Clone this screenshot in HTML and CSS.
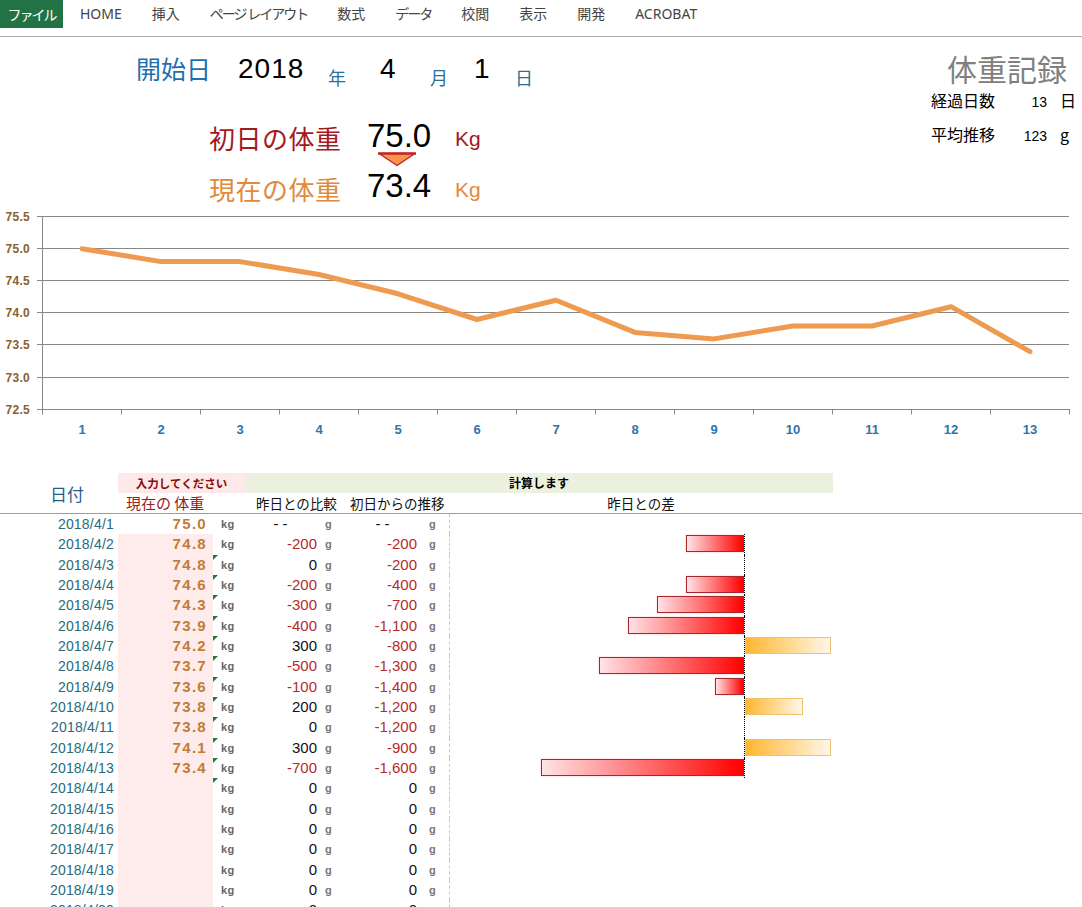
FILE: index.html
```html
<!DOCTYPE html>
<html lang="ja">
<head>
<meta charset="utf-8">
<title>体重記録</title>
<link rel="stylesheet" href="styles.css">
</head>
<body>
<div class="menu">
  <div class="menu-file">ファイル</div>
  <div class="menu-items">
    <span>HOME</span>
    <span>挿入</span>
    <span class="narrow">ページ レイアウト</span>
    <span>数式</span>
    <span class="narrow">データ</span>
    <span>校閲</span>
    <span>表示</span>
    <span>開発</span>
    <span>ACROBAT</span>
  </div>
</div>

<div class="top">
  <div class="top-left">
    <div class="start-row">
      <div class="start-label">開始日</div>
      <div class="big-digit">2018</div>
      <div class="unit-kanji">年</div>
      <div class="big-digit">4</div>
      <div class="unit-kanji">月</div>
      <div class="big-digit">1</div>
      <div class="unit-kanji">日</div>
    </div>
    <div class="weight-row w1">
      <div class="wlabel first-label">初日の体重</div>
      <div class="wnum">75.0</div>
      <div class="wunit first-unit">Kg</div>
    </div>
    <div class="tri-row">
      <svg width="40" height="15" viewBox="0 0 40 15">
        <polygon points="2,1.5 38,1.5 20,13.5" fill="#F7954A" stroke="#C0282A" stroke-width="1.5" stroke-linejoin="round"/>
        <line x1="1" y1="1.5" x2="39" y2="1.5" stroke="#C0282A" stroke-width="2.5"/>
      </svg>
    </div>
    <div class="weight-row w2">
      <div class="wlabel now-label">現在の体重</div>
      <div class="wnum">73.4</div>
      <div class="wunit now-unit">Kg</div>
    </div>
  </div>
  <div class="top-right">
    <div class="title">体重記録</div>
    <div class="stat stat1">
      <span class="stat-label">経過日数</span>
      <span class="stat-val">13</span>
      <span class="stat-unit">日</span>
    </div>
    <div class="stat stat2">
      <span class="stat-label">平均推移</span>
      <span class="stat-val">123</span>
      <span class="stat-unit">g</span>
    </div>
  </div>
</div>

<svg class="chart" width="1082" height="240" viewBox="0 0 1082 240">
  <g stroke="#878787" stroke-width="1">
    <line x1="37" y1="11.5" x2="1069" y2="11.5"/>
    <line x1="37" y1="43.5" x2="1069" y2="43.5"/>
    <line x1="37" y1="75.5" x2="1069" y2="75.5"/>
    <line x1="37" y1="107.5" x2="1069" y2="107.5"/>
    <line x1="37" y1="139.5" x2="1069" y2="139.5"/>
    <line x1="37" y1="172.5" x2="1069" y2="172.5"/>
    <line x1="37" y1="204.5" x2="1070" y2="204.5"/>
    <line x1="42.5" y1="11" x2="42.5" y2="209.5"/>
    <line x1="121.5" y1="204.5" x2="121.5" y2="209.5"/>
    <line x1="200.5" y1="204.5" x2="200.5" y2="209.5"/>
    <line x1="279.5" y1="204.5" x2="279.5" y2="209.5"/>
    <line x1="358.5" y1="204.5" x2="358.5" y2="209.5"/>
    <line x1="437.5" y1="204.5" x2="437.5" y2="209.5"/>
    <line x1="516.5" y1="204.5" x2="516.5" y2="209.5"/>
    <line x1="595.5" y1="204.5" x2="595.5" y2="209.5"/>
    <line x1="674.5" y1="204.5" x2="674.5" y2="209.5"/>
    <line x1="753.5" y1="204.5" x2="753.5" y2="209.5"/>
    <line x1="832.5" y1="204.5" x2="832.5" y2="209.5"/>
    <line x1="911.5" y1="204.5" x2="911.5" y2="209.5"/>
    <line x1="990.5" y1="204.5" x2="990.5" y2="209.5"/>
    <line x1="1069.5" y1="204.5" x2="1069.5" y2="209.5"/>
  </g>
  <g class="ylabels" text-anchor="end">
    <text x="30" y="16">75.5</text>
    <text x="30" y="48">75.0</text>
    <text x="30" y="80">74.5</text>
    <text x="30" y="112">74.0</text>
    <text x="30" y="144">73.5</text>
    <text x="30" y="177">73.0</text>
    <text x="30" y="209">72.5</text>
  </g>
  <g class="xlabels" text-anchor="middle">
    <text x="82" y="229">1</text>
    <text x="161" y="229">2</text>
    <text x="240" y="229">3</text>
    <text x="319" y="229">4</text>
    <text x="398" y="229">5</text>
    <text x="477" y="229">6</text>
    <text x="556" y="229">7</text>
    <text x="635" y="229">8</text>
    <text x="714" y="229">9</text>
    <text x="793" y="229">10</text>
    <text x="872" y="229">11</text>
    <text x="951" y="229">12</text>
    <text x="1030" y="229">13</text>
  </g>
  <polyline fill="none" stroke="#EE9A4F" stroke-width="5" stroke-linejoin="round" stroke-linecap="round"
    points="82,43.7 161,56.6 240,56.6 319,69.5 398,88.8 477,114.5 556,95.2 635,127.4 714,133.9 793,121 872,121 951,101.7 1030,146.7"/>
</svg>

<div class="thead">
  <div class="h-date">日付</div>
  <div class="h-input">入力してください</div>
  <div class="h-calc">計算します</div>
  <div class="h-weight">現在の 体重</div>
  <div class="h-cmp1">昨日との比較</div>
  <div class="h-cmp2">初日からの推移</div>
  <div class="h-diff">昨日との差</div>
</div>

<div class="tbody">
  <div class="trow">
    <div class="date">2018/4/1</div><div class="wt first">75.0</div><div class="kg">kg</div>
    <div class="val dash">--</div><div class="g">g</div><div class="val dash dash2">--</div><div class="g g2">g</div>
    <div class="bars"><div class="neg-side"></div><div class="pos-side"></div></div><div></div>
  </div>
  <div class="trow">
    <div class="date">2018/4/2</div><div class="wt">74.8</div><div class="kg">kg</div>
    <div class="val neg">-200</div><div class="g">g</div><div class="val neg">-200</div><div class="g g2">g</div>
    <div class="bars"><div class="neg-side"><div class="bar bar-neg" style="width:58px"></div></div><div class="pos-side axis"></div></div><div></div>
  </div>
  <div class="trow">
    <div class="date">2018/4/3</div><div class="wt">74.8</div><div class="kg flag">kg</div>
    <div class="val">0</div><div class="g">g</div><div class="val neg">-200</div><div class="g g2">g</div>
    <div class="bars"><div class="neg-side"></div><div class="pos-side axis"></div></div><div></div>
  </div>
  <div class="trow">
    <div class="date">2018/4/4</div><div class="wt">74.6</div><div class="kg flag">kg</div>
    <div class="val neg">-200</div><div class="g">g</div><div class="val neg">-400</div><div class="g g2">g</div>
    <div class="bars"><div class="neg-side"><div class="bar bar-neg" style="width:58px"></div></div><div class="pos-side axis"></div></div><div></div>
  </div>
  <div class="trow">
    <div class="date">2018/4/5</div><div class="wt">74.3</div><div class="kg flag">kg</div>
    <div class="val neg">-300</div><div class="g">g</div><div class="val neg">-700</div><div class="g g2">g</div>
    <div class="bars"><div class="neg-side"><div class="bar bar-neg" style="width:87px"></div></div><div class="pos-side axis"></div></div><div></div>
  </div>
  <div class="trow">
    <div class="date">2018/4/6</div><div class="wt">73.9</div><div class="kg flag">kg</div>
    <div class="val neg">-400</div><div class="g">g</div><div class="val neg">-1,100</div><div class="g g2">g</div>
    <div class="bars"><div class="neg-side"><div class="bar bar-neg" style="width:116px"></div></div><div class="pos-side axis"></div></div><div></div>
  </div>
  <div class="trow">
    <div class="date">2018/4/7</div><div class="wt">74.2</div><div class="kg flag">kg</div>
    <div class="val">300</div><div class="g">g</div><div class="val neg">-800</div><div class="g g2">g</div>
    <div class="bars"><div class="neg-side"></div><div class="pos-side axis"><div class="bar bar-pos" style="width:86px"></div></div></div><div></div>
  </div>
  <div class="trow">
    <div class="date">2018/4/8</div><div class="wt">73.7</div><div class="kg flag">kg</div>
    <div class="val neg">-500</div><div class="g">g</div><div class="val neg">-1,300</div><div class="g g2">g</div>
    <div class="bars"><div class="neg-side"><div class="bar bar-neg" style="width:145px"></div></div><div class="pos-side axis"></div></div><div></div>
  </div>
  <div class="trow">
    <div class="date">2018/4/9</div><div class="wt">73.6</div><div class="kg flag">kg</div>
    <div class="val neg">-100</div><div class="g">g</div><div class="val neg">-1,400</div><div class="g g2">g</div>
    <div class="bars"><div class="neg-side"><div class="bar bar-neg" style="width:29px"></div></div><div class="pos-side axis"></div></div><div></div>
  </div>
  <div class="trow">
    <div class="date">2018/4/10</div><div class="wt">73.8</div><div class="kg flag">kg</div>
    <div class="val">200</div><div class="g">g</div><div class="val neg">-1,200</div><div class="g g2">g</div>
    <div class="bars"><div class="neg-side"></div><div class="pos-side axis"><div class="bar bar-pos" style="width:58px"></div></div></div><div></div>
  </div>
  <div class="trow">
    <div class="date">2018/4/11</div><div class="wt">73.8</div><div class="kg flag">kg</div>
    <div class="val">0</div><div class="g">g</div><div class="val neg">-1,200</div><div class="g g2">g</div>
    <div class="bars"><div class="neg-side"></div><div class="pos-side axis"></div></div><div></div>
  </div>
  <div class="trow">
    <div class="date">2018/4/12</div><div class="wt">74.1</div><div class="kg flag">kg</div>
    <div class="val">300</div><div class="g">g</div><div class="val neg">-900</div><div class="g g2">g</div>
    <div class="bars"><div class="neg-side"></div><div class="pos-side axis"><div class="bar bar-pos" style="width:86px"></div></div></div><div></div>
  </div>
  <div class="trow">
    <div class="date">2018/4/13</div><div class="wt">73.4</div><div class="kg flag">kg</div>
    <div class="val neg">-700</div><div class="g">g</div><div class="val neg">-1,600</div><div class="g g2">g</div>
    <div class="bars"><div class="neg-side"><div class="bar bar-neg" style="width:203px"></div></div><div class="pos-side axis"></div></div><div></div>
  </div>
  <div class="trow">
    <div class="date">2018/4/14</div><div class="wt"></div><div class="kg flag">kg</div>
    <div class="val">0</div><div class="g">g</div><div class="val">0</div><div class="g g2">g</div>
    <div class="bars"><div class="neg-side"></div><div class="pos-side"></div></div><div></div>
  </div>
  <div class="trow">
    <div class="date">2018/4/15</div><div class="wt"></div><div class="kg">kg</div>
    <div class="val">0</div><div class="g">g</div><div class="val">0</div><div class="g g2">g</div>
    <div class="bars"><div class="neg-side"></div><div class="pos-side"></div></div><div></div>
  </div>
  <div class="trow">
    <div class="date">2018/4/16</div><div class="wt"></div><div class="kg">kg</div>
    <div class="val">0</div><div class="g">g</div><div class="val">0</div><div class="g g2">g</div>
    <div class="bars"><div class="neg-side"></div><div class="pos-side"></div></div><div></div>
  </div>
  <div class="trow">
    <div class="date">2018/4/17</div><div class="wt"></div><div class="kg">kg</div>
    <div class="val">0</div><div class="g">g</div><div class="val">0</div><div class="g g2">g</div>
    <div class="bars"><div class="neg-side"></div><div class="pos-side"></div></div><div></div>
  </div>
  <div class="trow">
    <div class="date">2018/4/18</div><div class="wt"></div><div class="kg">kg</div>
    <div class="val">0</div><div class="g">g</div><div class="val">0</div><div class="g g2">g</div>
    <div class="bars"><div class="neg-side"></div><div class="pos-side"></div></div><div></div>
  </div>
  <div class="trow">
    <div class="date">2018/4/19</div><div class="wt"></div><div class="kg">kg</div>
    <div class="val">0</div><div class="g">g</div><div class="val">0</div><div class="g g2">g</div>
    <div class="bars"><div class="neg-side"></div><div class="pos-side"></div></div><div></div>
  </div>
  <div class="trow">
    <div class="date">2018/4/20</div><div class="wt"></div><div class="kg">kg</div>
    <div class="val">0</div><div class="g">g</div><div class="val">0</div><div class="g g2">g</div>
    <div class="bars"><div class="neg-side"></div><div class="pos-side"></div></div><div></div>
  </div>
</div>
</body>
</html>
```

FILE: styles.css
```css
html, body {
  margin: 0;
  padding: 0;
  overflow: hidden;
  background: #fff;
}
body {
  width: 1082px;
  height: 907px;
  font-family: "Noto Sans CJK JP", "Noto Sans", sans-serif;
  color: #111;
}

/* ribbon menu */
.menu {
  display: flex;
  align-items: flex-start;
  height: 36px;
  border-bottom: 1px solid #ABABAB;
}
.menu-file {
  width: 63px;
  height: 28px;
  background: #217346;
  color: #fff;
  font-size: 14px;
  line-height: 28px;
  text-align: center;
  letter-spacing: -2px;
}
.menu-items {
  display: flex;
  gap: 30px;
  margin-left: 17px;
  font-family: "Noto Sans", "Noto Sans CJK JP", sans-serif;
  font-size: 14px;
  line-height: 28px;
  color: #444;
}
.menu-items .narrow {
  letter-spacing: -2px;
}

/* top info */
.top {
  display: flex;
  height: 168px;
}
.top-left {
  flex: 1;
}
.start-row {
  display: grid;
  grid-template-columns: 102px 90px 52px 50px 44px 41px auto;
  align-items: start;
  height: 60px;
  padding-left: 136px;
}
.start-label {
  margin-top: 19px;
  font-size: 25px;
  line-height: 25px;
  color: #1F6FAE;
}
.big-digit {
  margin-top: 18px;
  font-family: "Liberation Sans", sans-serif;
  font-size: 28px;
  line-height: 28px;
  letter-spacing: 1px;
  color: #000;
}
.unit-kanji {
  margin-top: 31px;
  font-size: 18px;
  line-height: 18px;
  color: #2B6F9B;
}
.weight-row {
  display: grid;
  grid-template-columns: 158px 88px auto;
  align-items: start;
  padding-left: 209px;
}
.w1 { height: 55px; }
.w2 { height: 38px; }
.wlabel {
  font-size: 26px;
  line-height: 26px;
  letter-spacing: 0.5px;
}
.wnum {
  font-family: "Liberation Sans", sans-serif;
  font-size: 33px;
  line-height: 33px;
  color: #000;
}
.wunit {
  font-family: "Liberation Sans", sans-serif;
  font-size: 21px;
  line-height: 21px;
}
.w1 .wlabel { margin-top: 28px; }
.w1 .wnum { margin-top: 22px; }
.w1 .wunit { margin-top: 31px; }
.w2 .wlabel { margin-top: 9px; }
.w2 .wnum { margin-top: 2px; }
.w2 .wunit { margin-top: 12px; }
.first-label, .first-unit { color: #A3191E; }
.now-label, .now-unit { color: #E08A3C; }
.tri-row {
  height: 15px;
  padding-left: 377px;
}
.tri-row svg { display: block; }

.top-right {
  width: 151px;
}
.title {
  margin-top: 16px;
  padding-right: 15px;
  text-align: right;
  font-size: 30px;
  line-height: 30px;
  color: #808080;
}
.stat {
  display: grid;
  grid-template-columns: 69px 50px auto;
  align-items: baseline;
  font-size: 16px;
  line-height: 16px;
  color: #000;
}
.stat1 { margin-top: 9px; }
.stat2 { margin-top: 16px; }
.stat-val {
  text-align: right;
  padding-right: 3px;
  font-family: "Liberation Sans", sans-serif;
  font-size: 14px;
}
.stat-unit { padding-left: 10px; }

/* chart */
.chart {
  display: block;
}
.ylabels text {
  font-family: "Liberation Sans", sans-serif;
  font-size: 12px;
  font-weight: bold;
  fill: #86622F;
  letter-spacing: 0.3px;
}
.xlabels text {
  font-family: "Liberation Sans", sans-serif;
  font-size: 13px;
  font-weight: bold;
  fill: #2E74A8;
}

/* table */
.thead, .trow {
  display: grid;
  grid-template-columns: 118px 95px 32px 75px 17px 83px 29px 384px 1fr;
}
.thead {
  grid-template-rows: 20px 20px;
  margin-top: 28px;
  border-bottom: 1px solid #9E9E9E;
}
.h-date {
  grid-column: 1;
  grid-row: 1 / 3;
  display: flex;
  align-items: center;
  justify-content: flex-end;
  padding-right: 34px;
  font-size: 17px;
  color: #1F5F8A;
}
.h-input {
  grid-column: 2 / 4;
  grid-row: 1;
  background: #FDE9E9;
  text-align: center;
  font-size: 11.5px;
  font-weight: bold;
  line-height: 20px;
  color: #8B0A0A;
}
.h-calc {
  grid-column: 4 / 9;
  grid-row: 1;
  background: #EBF1DE;
  text-align: center;
  font-size: 12px;
  font-weight: bold;
  line-height: 20px;
  color: #000;
}
.h-weight, .h-cmp1, .h-cmp2, .h-diff {
  grid-row: 2;
  line-height: 20px;
  white-space: nowrap;
}
.h-weight {
  grid-column: 2;
  padding-left: 8px;
  font-size: 15px;
  color: #9B1C1C;
}
.h-cmp1 {
  grid-column: 4 / 6;
  padding-left: 11px;
  font-size: 13.5px;
}
.h-cmp2 {
  grid-column: 6 / 8;
  padding-left: 13px;
  font-size: 13.5px;
}
.h-diff {
  grid-column: 8;
  text-align: center;
  font-size: 13.5px;
}

.trow {
  height: 20.33px;
  line-height: 20px;
}
.date {
  text-align: right;
  padding-right: 4px;
  font-family: "Liberation Sans", sans-serif;
  font-size: 14px;
  letter-spacing: 0.2px;
  color: #276B7C;
}
.wt {
  background: #FDECEB;
  text-align: right;
  padding-right: 6px;
  font-family: "Liberation Sans", sans-serif;
  font-size: 15px;
  font-weight: bold;
  letter-spacing: 1.3px;
  color: #C27C37;
}
.wt.first { background: #fff; }
.kg {
  position: relative;
  padding-left: 8px;
  font-family: "Liberation Sans", sans-serif;
  font-size: 11px;
  font-weight: bold;
  letter-spacing: 0.5px;
  color: #666;
}
.kg.flag::before {
  content: "";
  position: absolute;
  left: 0;
  top: 0;
  border-top: 5px solid #1E7B32;
  border-right: 5px solid transparent;
}
.val {
  text-align: right;
  padding-right: 3px;
  font-family: "Liberation Sans", sans-serif;
  font-size: 15px;
  color: #111;
}
.val.neg { color: #B52B2B; }
.val.dash {
  text-align: center;
  padding-right: 0;
  letter-spacing: 4px;
}
.val.dash2 { padding-left: 12px; }
.g {
  padding-left: 5px;
  font-family: "Liberation Sans", sans-serif;
  font-size: 11px;
  font-weight: bold;
  color: #777;
}
.g2 { padding-left: 9px; }

.bars {
  display: grid;
  grid-template-columns: 294px 1fr;
  border-left: 1px dashed #E3C4A0;
}
.neg-side {
  display: flex;
  justify-content: flex-end;
  align-items: flex-start;
}
.pos-side {
  display: flex;
  align-items: flex-start;
}
.axis {
  border-left: 1px dotted #000;
}
.bar {
  box-sizing: border-box;
  height: 17px;
  margin-top: 1px;
}
.bar-neg {
  border: 1px solid #A5282C;
  background: linear-gradient(to right, #FFE3E6, #FF0000);
  box-shadow: 0 0 2px rgba(255, 80, 80, 0.35);
}
.bar-pos {
  border: 1px solid #EFC26E;
  background: linear-gradient(to right, #FFB62F, #FFF7EA);
}
```
